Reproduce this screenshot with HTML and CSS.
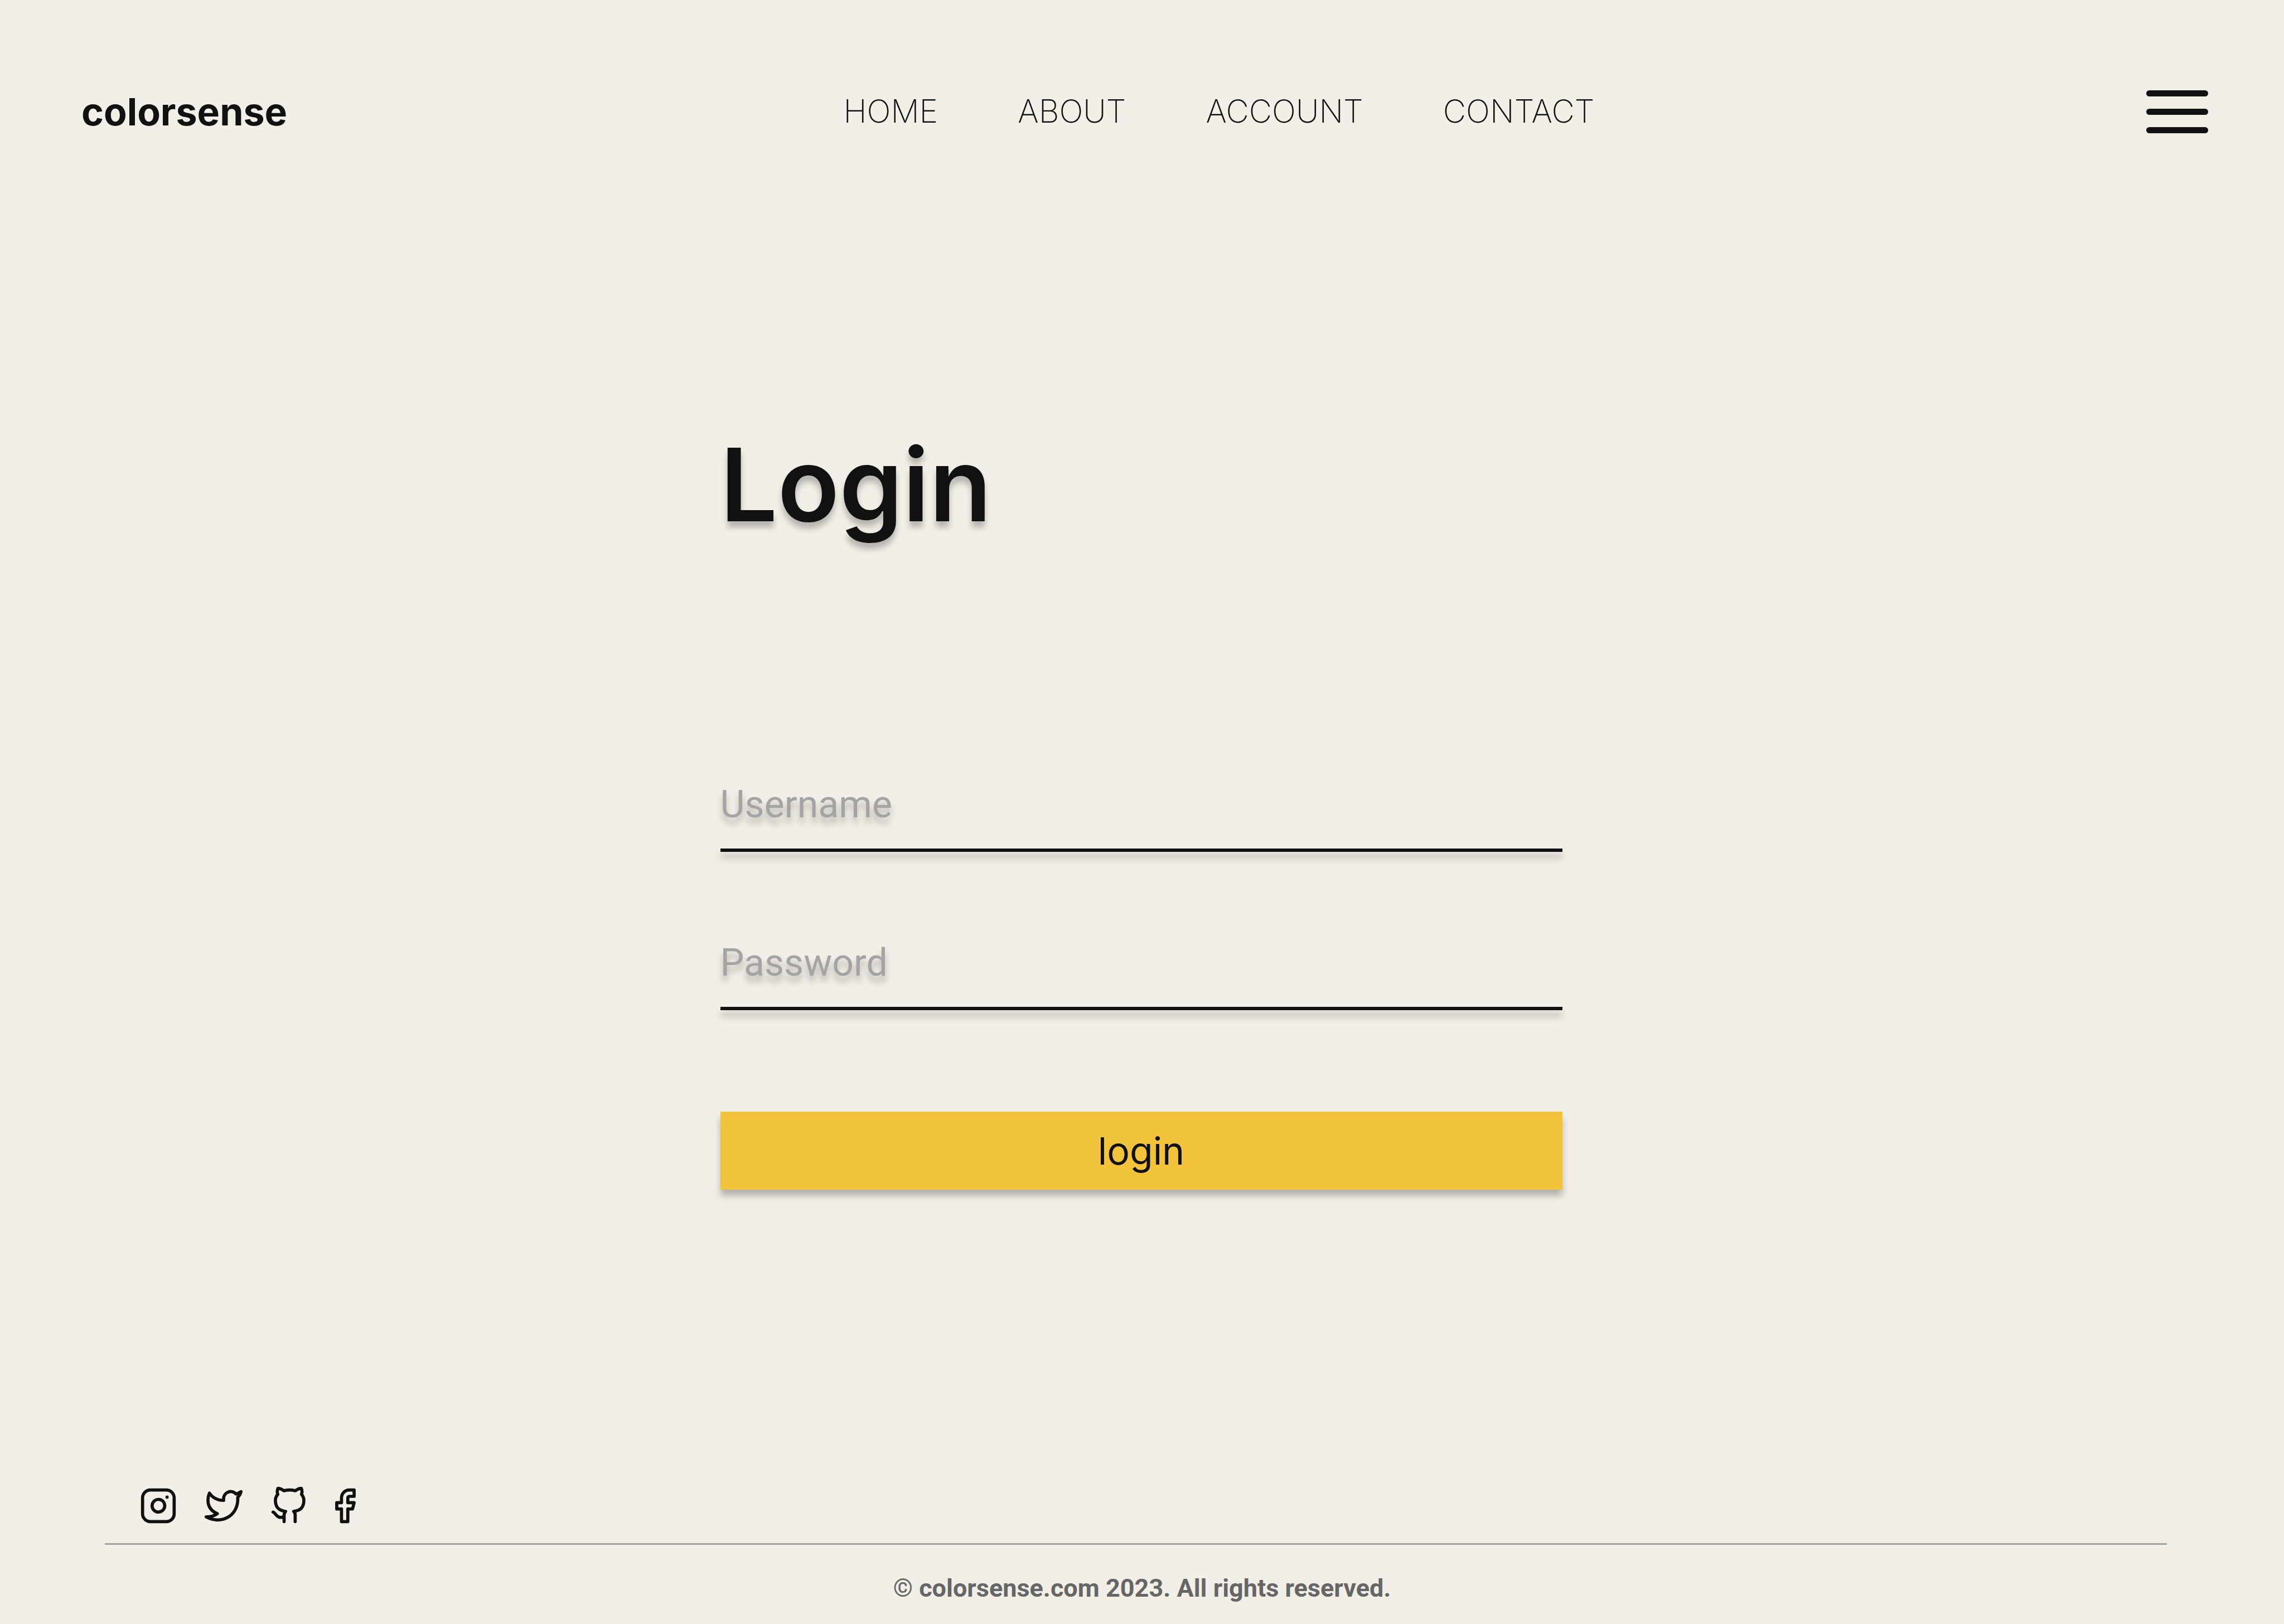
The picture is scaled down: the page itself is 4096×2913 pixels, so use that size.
FILE: index.html
```html
<!DOCTYPE html>
<html lang="en">
<head>
  <meta charset="utf-8">
  <meta name="viewport" content="width=device-width, initial-scale=1">
  <title>Login – colorsense</title>
  <link rel="stylesheet" href="styles.css">
</head>
<body class="page">
  <header class="header">
    <a class="logo" href="#">colorsense</a>
    <nav class="nav">
      <a class="nav-link" href="#">HOME</a>
      <a class="nav-link" href="#">ABOUT</a>
      <a class="nav-link" href="#">ACCOUNT</a>
      <a class="nav-link" href="#">CONTACT</a>
    </nav>
    <button class="menu" type="button" aria-label="Open menu">
      <span class="menu-bar"></span>
      <span class="menu-bar"></span>
      <span class="menu-bar"></span>
    </button>
  </header>

  <main class="main">
    <form class="login">
      <h1 class="title">Login</h1>
      <input class="field" type="text" name="username" placeholder="Username" aria-label="Username">
      <input class="field" type="password" name="password" placeholder="Password" aria-label="Password">
      <button class="submit" type="submit">login</button>
    </form>
  </main>

  <footer class="footer">
    <div class="social">
      <a class="social-link" href="#" aria-label="Instagram">
        <svg class="icon" viewBox="0 0 24 24"><rect x="2" y="2" width="20" height="20" rx="5"/><path d="M16 11.37A4 4 0 1 1 12.63 8 4 4 0 0 1 16 11.37z"/><path d="M17.5 6.5h.01"/></svg>
      </a>
      <a class="social-link" href="#" aria-label="Twitter">
        <svg class="icon" viewBox="0 0 24 24"><path d="M23 3a10.9 10.9 0 0 1-3.14 1.53 4.48 4.48 0 0 0-7.86 3v1A10.66 10.66 0 0 1 3 4s-4 9 5 13a11.64 11.64 0 0 1-7 2c9 5 20 0 20-11.5a4.5 4.5 0 0 0-.08-.83A7.72 7.72 0 0 0 23 3z"/></svg>
      </a>
      <a class="social-link" href="#" aria-label="GitHub">
        <svg class="icon" viewBox="0 0 24 24"><path d="M9 19c-5 1.5-5-2.5-7-3m14 6v-3.87a3.37 3.37 0 0 0-.94-2.61c3.14-.35 6.44-1.54 6.44-7A5.44 5.44 0 0 0 20 4.77 5.07 5.07 0 0 0 19.91 1S18.73.65 16 2.48a13.38 13.38 0 0 0-7 0C6.27.65 5.09 1 5.09 1A5.07 5.07 0 0 0 5 4.77a5.44 5.44 0 0 0-1.5 3.78c0 5.42 3.3 6.61 6.44 7A3.37 3.37 0 0 0 9 18.13V22"/></svg>
      </a>
      <a class="social-link" href="#" aria-label="Facebook">
        <svg class="icon icon-narrow" viewBox="6 0 13 24"><path d="M18 2h-3a5 5 0 0 0-5 5v3H7v4h3v8h4v-8h3l1-4h-4V7a1 1 0 0 1 1-1h3z"/></svg>
      </a>
    </div>
    <p class="copyright">© colorsense.com 2023. All rights reserved.</p>
  </footer>
</body>
</html>
```
FILE: styles.css
```css
* {
  box-sizing: border-box;
}

.page {
  display: flex;
  flex-direction: column;
  min-height: 100vh;
  margin: 0;
  background: #f2efe8;
  color: #111;
  font-family: Inter, "Liberation Sans", sans-serif;
}

a {
  color: inherit;
  text-decoration: none;
}

.header {
  display: flex;
  align-items: center;
  justify-content: space-between;
  padding: 156px 136px 0 146px;
}

.logo {
  padding-right: 8px;
  font-size: 68px;
  font-weight: 700;
  line-height: 88px;
}

.nav {
  display: flex;
  gap: 143px;
}

.nav-link {
  font-size: 57px;
  font-weight: 200;
  line-height: 88px;
}

.menu {
  display: flex;
  flex-direction: column;
  gap: 22px;
  width: 111px;
  padding: 0;
  border: 0;
  background: none;
}

.menu-bar {
  height: 11px;
  border-radius: 6px;
  background: #111;
}

.main {
  display: flex;
  flex: 1;
  justify-content: center;
  padding-right: 3px;
}

.login {
  display: flex;
  flex-direction: column;
  width: 1510px;
  padding-top: 515px;
}

.title {
  margin: 0 0 405px;
  font-size: 182px;
  font-weight: 600;
  line-height: 220px;
  text-shadow: 0 11px 11px rgba(0, 0, 0, 0.25);
}

.field {
  width: 100%;
  height: 144px;
  margin-bottom: 140px;
  padding: 0 0 20px;
  border: 0;
  border-bottom: 6px solid #111;
  outline: 0;
  background: none;
  color: #111;
  font-family: Roboto, "Liberation Sans", sans-serif;
  font-size: 68px;
  filter: drop-shadow(0 11px 6px rgba(0, 0, 0, 0.25));
}

.field::placeholder {
  color: #a4a4a4;
  opacity: 1;
}

.submit {
  height: 140px;
  margin-top: 42px;
  padding: 0;
  border: 0;
  background: #f2c43b;
  box-shadow: 0 11px 11px rgba(0, 0, 0, 0.25);
  color: #111;
  font-family: inherit;
  font-size: 68px;
  font-weight: 400;
}

.footer {
  padding-bottom: 34px;
}

.social {
  display: flex;
  gap: 49px;
  margin: 0 210px 0 188px;
  padding: 0 62px 33px;
  border-bottom: 3px solid #a4a4a4;
}

.icon {
  display: block;
  width: 68px;
  height: 68px;
  fill: none;
  stroke: #111;
  stroke-width: 2;
  stroke-linecap: round;
  stroke-linejoin: round;
}

.icon-narrow {
  width: 37px;
}

.copyright {
  margin: 48px 0 0;
  color: #666;
  font-family: Roboto, "Liberation Sans", sans-serif;
  font-size: 45px;
  font-weight: 700;
  line-height: 60px;
  text-align: center;
}
```
